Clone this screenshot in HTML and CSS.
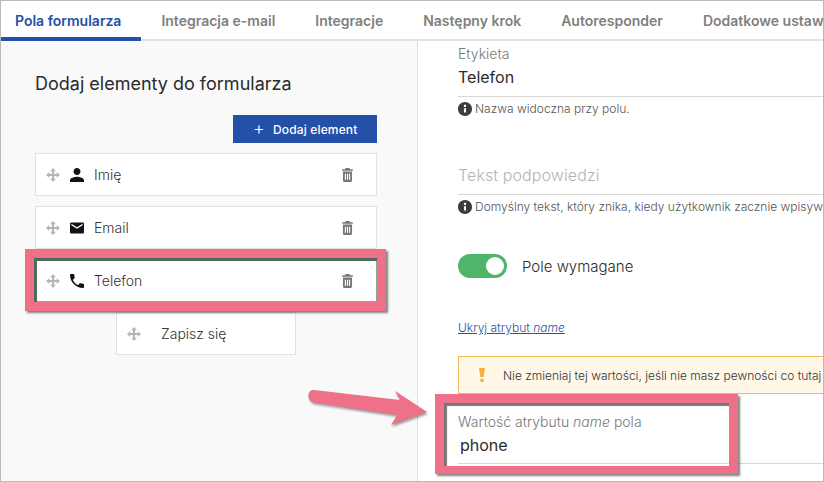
FILE: index.html
```html
<!DOCTYPE html>
<html lang="pl">
<head>
    <meta charset="UTF-8">
    <meta name="viewport" content="width=device-width, initial-scale=1.0">
    <title>Pola formularza</title>
    <link rel="stylesheet" href="styles.css">
</head>
<body>
    <svg class="icon-defs" aria-hidden="true">
        <symbol id="i-move" viewBox="0 0 24 24"><path d="M12 0l5 5.500h-3.200v4.700h4.700V7l5.500 5-5.500 5v-3.200h-4.700v4.700H17L12 24l-5-5.500h3.200v-4.700H5.500V17L0 12l5.500-5v3.200h4.700V5.500H7z"/></symbol>
        <symbol id="i-trash" viewBox="5 2.500 14 18.500"><path fill-rule="evenodd" d="M6 7h12v12c0 1.100-.9 2-2 2H8c-1.100 0-2-.9-2-2V7zm2.500 3v8H10v-8H8.500zm2.750 0v8h1.500v-8h-1.500zm2.750 0v8h1.500v-8H14zM19 4h-3.500l-1-1.500h-5L8.500 4H5v2h14V4z"/></symbol>
        <symbol id="i-person" viewBox="4 4 16 16"><path d="M12 12c2.210 0 4-1.790 4-4s-1.790-4-4-4-4 1.790-4 4 1.790 4 4 4zm0 2c-2.670 0-8 1.340-8 4v2h16v-2c0-2.660-5.330-4-8-4z"/></symbol>
        <symbol id="i-mail" viewBox="2 2 20 20"><path d="M20 4H4c-1.100 0-1.990.9-1.990 2L2 18c0 1.100.9 2 2 2h16c1.100 0 2-.9 2-2V6c0-1.100-.9-2-2-2zm0 4l-8 5-8-5V6l8 5 8-5v2z"/></symbol>
        <symbol id="i-phone" viewBox="3 3 18 18"><path d="M6.620 10.790c1.440 2.830 3.760 5.140 6.590 6.590l2.200-2.200c.27-.27.67-.36 1.020-.24 1.120.37 2.330.57 3.570.57.55 0 1 .45 1 1V20c0 .55-.45 1-1 1-9.390 0-17-7.610-17-17 0-.55.45-1 1-1h3.500c.55 0 1 .45 1 1 0 1.250.2 2.450.57 3.570.11.35.03.74-.25 1.020l-2.200 2.200z"/></symbol>
        <symbol id="i-info" viewBox="2 2 20 20"><path d="M12 2C6.480 2 2 6.480 2 12s4.480 10 10 10 10-4.480 10-10S17.520 2 12 2zm1.500 15h-3v-6h3v6zm0-8h-3V6h3v3z"/></symbol>
    </svg>

    <div class="window">
        <nav class="tabs">
            <a class="tab active">Pola formularza</a>
            <a class="tab">Integracja e-mail</a>
            <a class="tab">Integracje</a>
            <a class="tab">Następny krok</a>
            <a class="tab">Autoresponder</a>
            <a class="tab">Dodatkowe ustawienia</a>
        </nav>
        <div class="content">
            <section class="left">
                <h2>Dodaj elementy do formularza</h2>
                <div class="actions">
                    <button class="add-button"><span class="plus">+</span>Dodaj element</button>
                </div>
                <div class="field-row">
                    <svg class="drag"><use href="#i-move"/></svg>
                    <svg class="type"><use href="#i-person"/></svg>
                    <span class="field-name">Imię</span>
                    <svg class="trash"><use href="#i-trash"/></svg>
                </div>
                <div class="field-row">
                    <svg class="drag"><use href="#i-move"/></svg>
                    <svg class="type"><use href="#i-mail"/></svg>
                    <span class="field-name">Email</span>
                    <svg class="trash"><use href="#i-trash"/></svg>
                </div>
                <div class="field-row">
                    <svg class="drag"><use href="#i-move"/></svg>
                    <svg class="type"><use href="#i-phone"/></svg>
                    <span class="field-name">Telefon</span>
                    <svg class="trash"><use href="#i-trash"/></svg>
                </div>
                <div class="field-row submit-row">
                    <svg class="drag"><use href="#i-move"/></svg>
                    <span class="field-name">Zapisz się</span>
                </div>
            </section>
            <section class="right">
                <div class="form-group">
                    <label>Etykieta</label>
                    <div class="input">Telefon</div>
                    <p class="hint"><svg><use href="#i-info"/></svg>Nazwa widoczna przy polu.</p>
                </div>
                <div class="form-group placeholder-group">
                    <div class="input placeholder">Tekst podpowiedzi</div>
                    <p class="hint"><svg><use href="#i-info"/></svg>Domyślny tekst, który znika, kiedy użytkownik zacznie wpisywać wartość w polu.</p>
                </div>
                <div class="switch-row">
                    <span class="switch"></span>
                    <span>Pole wymagane</span>
                </div>
                <a class="link">Ukryj atrybut <em>name</em></a>
                <div class="warning">
                    <span class="warning-mark"></span>
                    <span>Nie zmieniaj tej wartości, jeśli nie masz pewności co tutaj wpisać.</span>
                </div>
                <div class="form-group name-group">
                    <label>Wartość atrybutu <em>name</em> pola</label>
                    <div class="input">phone</div>
                </div>
            </section>
        </div>

        <!-- adnotacje na zrzucie -->
        <div class="mark mark-row"></div>
        <div class="mark mark-name"></div>
        <svg class="arrow" viewBox="0 0 130 50">
            <path d="M14 2L100 12 95 3 127 24 91 37 97 27 14 14.500C6 13 7 1 14 2Z"/>
        </svg>
    </div>
</body>
</html>
```

FILE: styles.css
```css
* {
    box-sizing: border-box;
}
body {
    font-family: Inter, "Liberation Sans", sans-serif;
    margin: 0;
    background-color: #fff;
    color: #333;
}
.icon-defs {
    display: none;
}
.window {
    position: relative;
    width: 824px;
    height: 482px;
    border: 1px solid #b9b9b9;
    overflow: hidden;
}
.tabs {
    display: flex;
    height: 40px;
    border-bottom: 2px solid #e2e2e2;
    white-space: nowrap;
}
.tab {
    height: 40px;
    padding: 0 20px;
    line-height: 40px;
    font-size: 14px;
    font-weight: 600;
    color: #7f7f7f;
}
.tab.active {
    padding-left: 14px;
    color: #2450a8;
    border-bottom: 4px solid #2450a8;
}
.content {
    display: flex;
    height: 440px;
}
.left {
    width: 417px;
    flex: none;
    padding: 0 40px 0 34px;
    background-color: #f9f9f9;
    border-right: 1px solid #e0e0e0;
}
.left h2 {
    margin: 31px 0 19px;
    font-size: 18px;
    line-height: 24px;
    font-weight: 400;
    color: #2b2b2b;
}
.actions {
    display: flex;
    justify-content: flex-end;
    margin-bottom: 10px;
}
.add-button {
    display: flex;
    align-items: center;
    width: 144px;
    height: 28px;
    padding: 0 0 0 20px;
    background-color: #2450a8;
    color: white;
    border: none;
    font-family: inherit;
    font-size: 12px;
    font-weight: 500;
    letter-spacing: 0.15px;
}
.plus {
    width: 20px;
    font-size: 18px;
    line-height: 24px;
    font-weight: 300;
    text-align: left;
}
.field-row {
    display: flex;
    align-items: center;
    height: 43px;
    margin-bottom: 10px;
    padding: 0 22px 0 10px;
    background-color: white;
    border: 1px solid #e2e2e2;
    font-size: 14px;
    font-weight: 300;
}
.field-row svg {
    flex: none;
}
.drag {
    width: 14px;
    height: 14px;
    fill: #b5b5b5;
}
.type {
    width: 14px;
    height: 14px;
    margin-left: 10px;
    fill: #111;
}
.field-name {
    margin-left: 10px;
    flex: 1;
}
.trash {
    width: 13px;
    height: 14px;
    fill: #777;
}
.submit-row {
    width: 180px;
    margin-left: 81px;
}
.submit-row .field-name {
    margin-left: 20px;
}
.right {
    flex: 1;
    padding: 4px 0 0 40px;
    min-width: 0;
    white-space: nowrap;
}
.form-group label {
    display: block;
    font-size: 14px;
    line-height: 18px;
    font-weight: 300;
    color: #777;
}
.input {
    height: 34px;
    padding-top: 3px;
    font-size: 16px;
    line-height: 22px;
    font-weight: 400;
    color: #2b2b2b;
    border-bottom: 1px solid #d8d8d8;
}
.input.placeholder {
    color: #b4b4b4;
    font-weight: 300;
    letter-spacing: 0.1px;
}
.hint {
    display: flex;
    align-items: center;
    margin: 4px 0 0;
    font-size: 12px;
    line-height: 16px;
    font-weight: 300;
    color: #555;
}
.hint svg {
    width: 14px;
    height: 14px;
    margin-right: 3px;
    flex: none;
    fill: #3c3c3c;
}
.placeholder-group {
    margin-top: 44px;
}
.switch-row {
    display: flex;
    align-items: center;
    gap: 15px;
    margin-top: 39px;
    font-size: 15px;
    font-weight: 300;
    color: #2b2b2b;
}
.switch {
    position: relative;
    width: 49px;
    height: 24px;
    border-radius: 12px;
    background-color: #4fb568;
}
.switch::after {
    content: "";
    position: absolute;
    top: 3px;
    right: 3px;
    width: 18px;
    height: 18px;
    border-radius: 50%;
    background-color: white;
}
.link {
    display: block;
    margin-top: 42px;
    font-size: 12px;
    line-height: 16px;
    font-weight: 300;
    color: #2450a8;
    text-decoration: underline;
}
.warning {
    display: flex;
    align-items: center;
    height: 38px;
    margin-top: 20px;
    padding-left: 20px;
    background-color: #fff8e8;
    border: 1px solid #f0b85a;
    border-right: none;
    font-size: 12px;
    font-weight: 300;
    color: #333;
}
.warning-mark {
    width: 6px;
    height: 14px;
    margin-right: 18px;
    flex: none;
    background-color: #f5b041;
    clip-path: polygon(0 0, 100% 0, 78% 64%, 22% 64%, 22% 76%, 78% 76%, 78% 100%, 22% 100%, 22% 64%);
}
.name-group {
    width: 365px;
    margin-top: 19px;
}
.name-group .input {
    padding-left: 2px;
    height: 33px;
}
.mark {
    position: absolute;
    border: 9px solid #ee7189;
    box-shadow: 2px 2px 2px rgba(60, 60, 60, 0.65), inset 3px 3px 1px rgba(60, 60, 60, 0.7);
}
.mark-row {
    left: 24px;
    top: 248px;
    width: 361px;
    height: 62px;
    box-shadow: 2px 2px 2px rgba(60, 60, 60, 0.65), inset 3px 3px 0 #51695a, inset -1px -1px 0 #8fa88a;
}
.mark-name {
    left: 434px;
    top: 393px;
    width: 303px;
    height: 80px;
    border-bottom-width: 8px;
}
.arrow {
    position: absolute;
    left: 299px;
    top: 387px;
    width: 130px;
    height: 50px;
    fill: #ee7189;
    filter: drop-shadow(1px 2px 1px rgba(60, 60, 60, 0.5));
}
```
